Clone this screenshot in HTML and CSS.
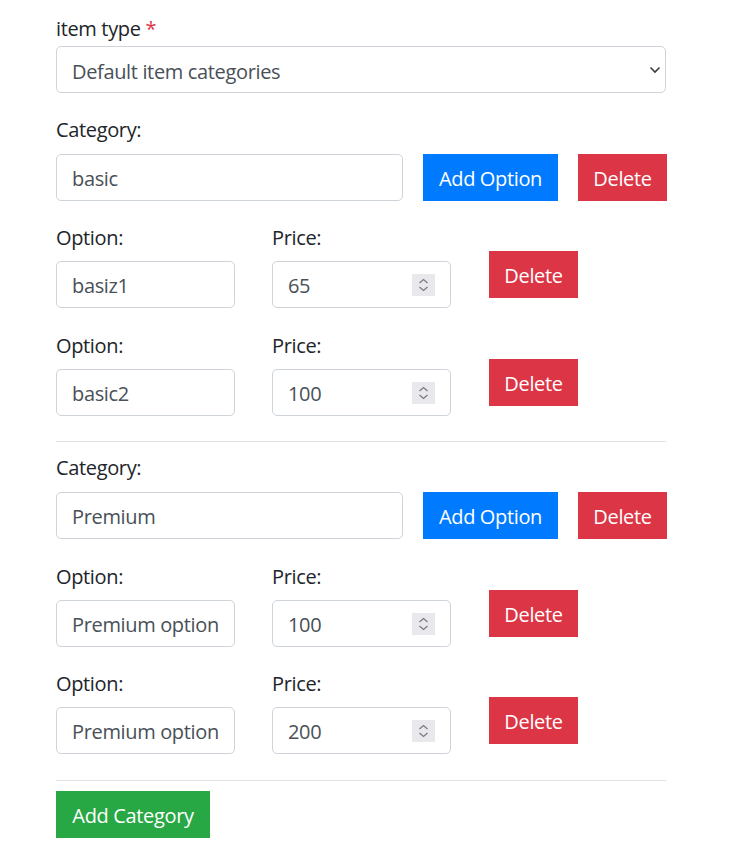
FILE: index.html
```html
<!DOCTYPE html>
<html lang="en">
<head>
<meta charset="utf-8">
<title>Item categories</title>
<link rel="stylesheet" href="styles.css">
</head>
<body>
<form class="page">
  <label class="lbl lbl-type">item type <span class="req">*</span></label>
  <div class="select-wrap">
    <select class="ctl select">
      <option>Default item categories</option>
    </select>
    <svg class="chev" width="12" height="8" viewBox="0 0 12 8"><path d="M1.5 1.5 L6 6 L10.5 1.5" fill="none" stroke="#3c3c3c" stroke-width="1.6"/></svg>
  </div>

  <div class="cat mt-22">
    <label class="lbl lbl-cat">Category:</label>
    <div class="cat-row">
      <input class="ctl cat-input" type="text" value="basic">
      <button type="button" class="btn btn-blue w-add">Add Option</button>
      <button type="button" class="btn btn-red w-del">Delete</button>
    </div>
  </div>

  <div class="opt-row mt-22">
    <div class="field">
      <label class="lbl lbl-opt">Option:</label>
      <input class="ctl small" type="text" value="basiz1">
    </div>
    <div class="field">
      <label class="lbl lbl-opt">Price:</label>
      <div class="num-wrap">
        <input class="ctl small num" type="text" value="65">
        <span class="spin"><svg width="23" height="22" viewBox="0 0 23 22"><path d="M7.5 9 L11.5 5.5 L15.5 9 M7.5 13 L11.5 16.5 L15.5 13" fill="none" stroke="#7a7a7a" stroke-width="1.2"/></svg></span>
      </div>
    </div>
    <button type="button" class="btn btn-red w-del opt-del">Delete</button>
  </div>

  <div class="opt-row mt-23">
    <div class="field">
      <label class="lbl lbl-opt">Option:</label>
      <input class="ctl small" type="text" value="basic2">
    </div>
    <div class="field">
      <label class="lbl lbl-opt">Price:</label>
      <div class="num-wrap">
        <input class="ctl small num" type="text" value="100">
        <span class="spin"><svg width="23" height="22" viewBox="0 0 23 22"><path d="M7.5 9 L11.5 5.5 L15.5 9 M7.5 13 L11.5 16.5 L15.5 13" fill="none" stroke="#7a7a7a" stroke-width="1.2"/></svg></span>
      </div>
    </div>
    <button type="button" class="btn btn-red w-del opt-del">Delete</button>
  </div>

  <hr class="rule rule-1">

  <div class="cat mt-11">
    <label class="lbl lbl-cat">Category:</label>
    <div class="cat-row">
      <input class="ctl cat-input" type="text" value="Premium">
      <button type="button" class="btn btn-blue w-add">Add Option</button>
      <button type="button" class="btn btn-red w-del">Delete</button>
    </div>
  </div>

  <div class="opt-row mt-23">
    <div class="field">
      <label class="lbl lbl-opt">Option:</label>
      <input class="ctl small" type="text" value="Premium option">
    </div>
    <div class="field">
      <label class="lbl lbl-opt">Price:</label>
      <div class="num-wrap">
        <input class="ctl small num" type="text" value="100">
        <span class="spin"><svg width="23" height="22" viewBox="0 0 23 22"><path d="M7.5 9 L11.5 5.5 L15.5 9 M7.5 13 L11.5 16.5 L15.5 13" fill="none" stroke="#7a7a7a" stroke-width="1.2"/></svg></span>
      </div>
    </div>
    <button type="button" class="btn btn-red w-del opt-del">Delete</button>
  </div>

  <div class="opt-row mt-22">
    <div class="field">
      <label class="lbl lbl-opt">Option:</label>
      <input class="ctl small" type="text" value="Premium option">
    </div>
    <div class="field">
      <label class="lbl lbl-opt">Price:</label>
      <div class="num-wrap">
        <input class="ctl small num" type="text" value="200">
        <span class="spin"><svg width="23" height="22" viewBox="0 0 23 22"><path d="M7.5 9 L11.5 5.5 L15.5 9 M7.5 13 L11.5 16.5 L15.5 13" fill="none" stroke="#7a7a7a" stroke-width="1.2"/></svg></span>
      </div>
    </div>
    <button type="button" class="btn btn-red w-del opt-del">Delete</button>
  </div>

  <hr class="rule rule-2">

  <button type="button" class="btn btn-green w-addcat">Add Category</button>
</form>
</body>
</html>
```

FILE: styles.css
```css
html, body {
  margin: 0;
  padding: 0;
  background: #ffffff;
}

body {
  font-family: "Open Sans", "Noto Sans", sans-serif;
  font-size: 20px;
  color: #212529;
}

.page {
  width: 610px;
  margin: 0 0 0 56px;
  padding-top: 14px;
  display: flex;
  flex-direction: column;
  align-items: flex-start;
}

.lbl {
  display: block;
  line-height: 30px;
  height: 30px;
  letter-spacing: -0.35px;
}

.lbl-type { margin-bottom: 2px; }
.lbl-cat { margin-bottom: 9px; }
.lbl-opt { margin-bottom: 8px; }

.req { color: #dc3545; }

.mt-22 { margin-top: 22px; }
.mt-23 { margin-top: 23px; }
.mt-11 { margin-top: 11px; }

.ctl {
  box-sizing: border-box;
  height: 47px;
  border: 1px solid #ced4da;
  border-radius: 5px;
  background: #ffffff;
  color: #495057;
  font-family: inherit;
  font-size: 20px;
  letter-spacing: -0.35px;
  padding: 0 15px;
  margin: 0;
  outline: none;
}

.select-wrap {
  position: relative;
  width: 610px;
}

.select {
  width: 610px;
  -webkit-appearance: none;
  appearance: none;
  padding-top: 3px;
  padding-right: 40px;
}

.chev {
  position: absolute;
  right: 5px;
  top: 20px;
  pointer-events: none;
}

.cat { width: 610px; }

.cat-row {
  display: flex;
  align-items: flex-start;
  gap: 20px;
}

.cat-row > * { flex-shrink: 0; }

.cat-input {
  width: 347px;
  padding-top: 2px;
}

.btn {
  box-sizing: border-box;
  height: 47px;
  border: 1px solid transparent;
  border-radius: 0;
  color: #ffffff;
  font-family: inherit;
  font-size: 20px;
  letter-spacing: -0.35px;
  padding: 2px 0 0;
  margin: 0;
  text-align: center;
  cursor: pointer;
}

.btn-blue { background: #007bff; border-color: #007bff; }
.btn-red { background: #dc3545; border-color: #dc3545; }
.btn-green { background: #28a745; border-color: #28a745; }

.w-add { width: 135px; }
.w-del { width: 89px; }
.w-addcat { width: 154px; }

.opt-row {
  display: flex;
  align-items: flex-start;
}

.field {
  display: flex;
  flex-direction: column;
  width: 179px;
  margin-right: 37px;
}

.field + .field { margin-right: 38px; }

.small {
  width: 179px;
  padding-top: 2px;
}

.num-wrap {
  position: relative;
  width: 179px;
}

.num { padding-right: 45px; }

.spin {
  position: absolute;
  right: 16px;
  top: 13px;
  width: 23px;
  height: 22px;
  background: #e9e9ed;
  display: block;
}

.spin svg { display: block; }

.opt-del {
  margin-top: 28px;
}

.rule {
  box-sizing: border-box;
  width: 610px;
  height: 1px;
  margin: 0;
  border: 0;
  background: #e3e3e3;
}

.rule-1 { margin-top: 25px; }
.rule-2 { margin-top: 26px; margin-bottom: 10px; }
```
